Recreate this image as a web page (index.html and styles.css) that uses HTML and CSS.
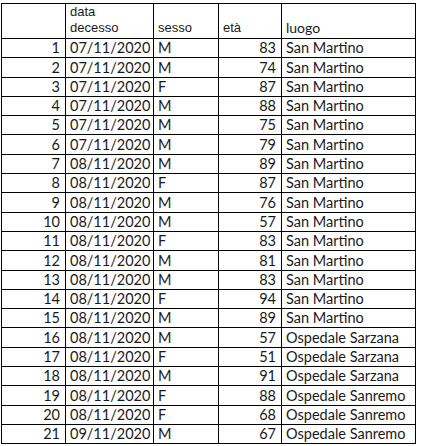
FILE: index.html
```
<!DOCTYPE html>
<html>
<head>
<meta charset="utf-8">
<link rel="stylesheet" href="styles.css">
</head>
<body>
<table class="sheet">
<colgroup>
<col class="c-num"><col class="c-date"><col class="c-sex"><col class="c-age"><col class="c-place">
</colgroup>
<thead>
<tr class="head">
<th></th>
<th class="h-arial">data<br>decesso</th>
<th class="h-arial">sesso</th>
<th class="h-arial">età</th>
<th class="h-cal">luogo</th>
</tr>
</thead>
<tbody>
<tr><td class="r">1</td><td>07/11/2020</td><td>M</td><td class="r">83</td><td>San Martino</td></tr>
<tr><td class="r">2</td><td>07/11/2020</td><td>M</td><td class="r">74</td><td>San Martino</td></tr>
<tr><td class="r">3</td><td>07/11/2020</td><td>F</td><td class="r">87</td><td>San Martino</td></tr>
<tr><td class="r">4</td><td>07/11/2020</td><td>M</td><td class="r">88</td><td>San Martino</td></tr>
<tr><td class="r">5</td><td>07/11/2020</td><td>M</td><td class="r">75</td><td>San Martino</td></tr>
<tr><td class="r">6</td><td>07/11/2020</td><td>M</td><td class="r">79</td><td>San Martino</td></tr>
<tr><td class="r">7</td><td>08/11/2020</td><td>M</td><td class="r">89</td><td>San Martino</td></tr>
<tr><td class="r">8</td><td>08/11/2020</td><td>F</td><td class="r">87</td><td>San Martino</td></tr>
<tr><td class="r">9</td><td>08/11/2020</td><td>M</td><td class="r">76</td><td>San Martino</td></tr>
<tr><td class="r">10</td><td>08/11/2020</td><td>M</td><td class="r">57</td><td>San Martino</td></tr>
<tr><td class="r">11</td><td>08/11/2020</td><td>F</td><td class="r">83</td><td>San Martino</td></tr>
<tr><td class="r">12</td><td>08/11/2020</td><td>M</td><td class="r">81</td><td>San Martino</td></tr>
<tr><td class="r">13</td><td>08/11/2020</td><td>M</td><td class="r">83</td><td>San Martino</td></tr>
<tr><td class="r">14</td><td>08/11/2020</td><td>F</td><td class="r">94</td><td>San Martino</td></tr>
<tr><td class="r">15</td><td>08/11/2020</td><td>M</td><td class="r">89</td><td>San Martino</td></tr>
<tr><td class="r">16</td><td>08/11/2020</td><td>M</td><td class="r">57</td><td>Ospedale Sarzana</td></tr>
<tr><td class="r">17</td><td>08/11/2020</td><td>F</td><td class="r">51</td><td>Ospedale Sarzana</td></tr>
<tr><td class="r">18</td><td>08/11/2020</td><td>M</td><td class="r">91</td><td>Ospedale Sarzana</td></tr>
<tr><td class="r">19</td><td>08/11/2020</td><td>F</td><td class="r">88</td><td>Ospedale Sanremo</td></tr>
<tr><td class="r">20</td><td>08/11/2020</td><td>F</td><td class="r">68</td><td>Ospedale Sanremo</td></tr>
<tr><td class="r">21</td><td>09/11/2020</td><td>M</td><td class="r">67</td><td>Ospedale Sanremo</td></tr>
</tbody>
</table>
</body>
</html>
```
FILE: styles.css
```
html, body {
  margin: 0;
  background: #ffffff;
}
body {
  padding: 3px 0 0 1px;
}
.sheet {
  border-collapse: collapse;
  table-layout: fixed;
  width: 414px;
  font-family: Lato, "Liberation Sans", sans-serif;
  font-size: 14.5px;
  color: #1a1a1a;
}
.c-num { width: 64px; }
.c-date { width: 88px; }
.c-sex { width: 65px; }
.c-age { width: 63px; }
.c-place { width: 134px; }
.sheet th,
.sheet td {
  border: 1px solid #000000;
  padding: 0 4px 1px 4px;
  vertical-align: bottom;
  text-align: left;
  font-weight: normal;
  white-space: nowrap;
  line-height: 16px;
}
.head th {
  height: 32px;
  box-sizing: border-box;
  padding-bottom: 2px;
}
.h-arial {
  font-family: "Liberation Sans", Arial, sans-serif;
  font-size: 13px;
  color: #1a1a1a;
}
.h-cal {
  font-family: Lato, sans-serif;
  font-size: 14px;
}
.sheet tbody td {
  height: 19.3px;
  box-sizing: border-box;
}
.sheet td.r {
  text-align: right;
  padding-right: 5px;
}
```
